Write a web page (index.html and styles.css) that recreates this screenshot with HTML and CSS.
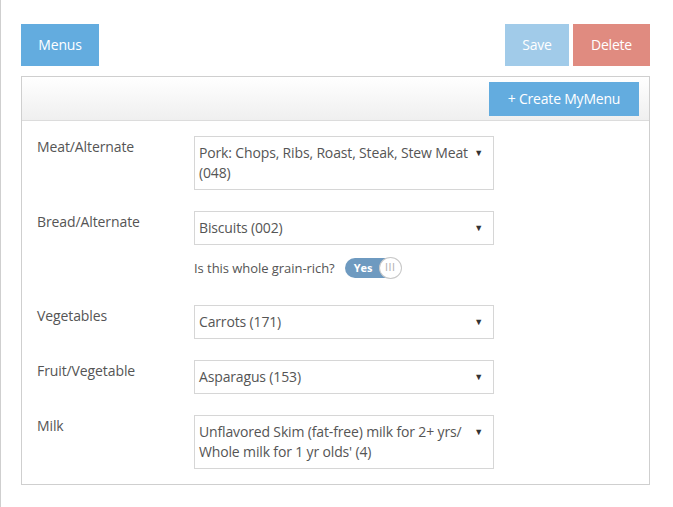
FILE: index.html
```html
<!DOCTYPE html>
<html>
<head>
<meta charset="utf-8">
<link rel="stylesheet" href="styles.css">
</head>
<body>
<div class="page">
  <div class="topbar">
    <button class="btn btn-primary">Menus</button>
    <div class="actions">
      <button class="btn btn-save">Save</button>
      <button class="btn btn-delete">Delete</button>
    </div>
  </div>
  <div class="panel">
    <div class="panel-head">
      <button class="btn btn-create">+ Create MyMenu</button>
    </div>
    <div class="panel-body">
      <div class="row">
        <div class="label">Meat/Alternate</div>
        <div class="select"><span class="val">Pork: Chops, Ribs, Roast, Steak, Stew Meat (048)</span><span class="arrow">▼</span></div>
      </div>
      <div class="row row-toggle">
        <div class="label">Bread/Alternate</div>
        <div class="field">
          <div class="select"><span class="val">Biscuits (002)</span><span class="arrow">▼</span></div>
          <div class="toggle-line">
            <span class="q">Is this whole grain-rich?</span>
            <span class="toggle"><span class="yes">Yes</span><span class="knob">III</span></span>
          </div>
        </div>
      </div>
      <div class="row">
        <div class="label">Vegetables</div>
        <div class="select"><span class="val">Carrots (171)</span><span class="arrow">▼</span></div>
      </div>
      <div class="row">
        <div class="label">Fruit/Vegetable</div>
        <div class="select"><span class="val">Asparagus (153)</span><span class="arrow">▼</span></div>
      </div>
      <div class="row last">
        <div class="label">Milk</div>
        <div class="select"><span class="val">Unflavored Skim (fat-free) milk for 2+ yrs/ Whole milk for 1 yr olds' (4)</span><span class="arrow">▼</span></div>
      </div>
    </div>
  </div>
</div>
</body>
</html>
```

FILE: styles.css
```css
html, body {
  margin: 0;
  padding: 0;
  background: #fff;
}
body {
  font-family: "Open Sans", "Noto Sans", sans-serif;
  font-size: 14px;
  color: #555;
  border-left: 1px solid #cfcfcf;
  min-height: 100vh;
  box-sizing: border-box;
}
.page {
  padding: 24px 23px 0 20px;
}
.topbar {
  display: flex;
  justify-content: space-between;
  align-items: flex-start;
}
.actions {
  display: flex;
  gap: 4px;
}
.btn {
  font-family: "Open Sans", "Noto Sans", sans-serif;
  font-size: 14px;
  color: #fff;
  border: 0;
  border-radius: 0;
  height: 42px;
  padding: 0;
  line-height: 42px;
  cursor: pointer;
  letter-spacing: -0.2px;
}
.btn-primary { background: #63acdf; width: 78px; }
.btn-save { background: #a1cbe9; width: 64px; }
.btn-delete { background: #e08b80; width: 77px; }
.panel {
  margin-top: 10px;
  border: 1px solid #cfcfcf;
}
.panel-head {
  height: 44px;
  box-sizing: border-box;
  border-bottom: 1px solid #dcdcdc;
  background: linear-gradient(#ffffff, #efefef);
  display: flex;
  justify-content: flex-end;
  padding: 5px 10px 0 0;
}
.btn-create {
  background: #63acdf;
  height: 34px;
  line-height: 34px;
  width: 150px;
}
.panel-body {
  padding: 15px 15px 15px 15px;
}
.row {
  display: grid;
  grid-template-columns: 157px 300px;
  margin-bottom: 21px;
}
.row.row-toggle { margin-bottom: 27px; }
.row.last { margin-bottom: 0; }
.label {
  line-height: 20px;
  padding-top: 1px;
  color: #555;
  letter-spacing: -0.1px;
}
.select {
  border: 1px solid #d6d6d6;
  padding: 6px 16px 6px 4px;
  line-height: 20px;
  position: relative;
  color: #555;
  letter-spacing: -0.15px;
}
.arrow {
  position: absolute;
  right: 10px;
  top: 6px;
  font-size: 9px;
  color: #333;
  line-height: 20px;
}
.toggle-line {
  margin-top: 12px;
  display: flex;
  align-items: center;
  height: 21px;
}
.q {
  font-size: 13px;
  color: #555;
  margin-right: 10px;
  letter-spacing: -0.05px;
}
.toggle {
  display: inline-flex;
  align-items: center;
  width: 56px;
  height: 20px;
  border-radius: 10px;
  background: #6e9ac0;
  position: relative;
  box-sizing: border-box;
}
.yes {
  color: #fff;
  font-size: 11px;
  font-weight: bold;
  padding-left: 9px;
}
.knob {
  position: absolute;
  right: -1px;
  top: -1px;
  width: 23px;
  height: 22px;
  border-radius: 50%;
  background: #fff;
  border: 1px solid #c8c8c8;
  box-sizing: border-box;
  font-size: 10px;
  color: #b5b5b5;
  text-align: center;
  line-height: 20px;
  letter-spacing: 0.5px;
  font-family: "DejaVu Sans", sans-serif;
}
```
